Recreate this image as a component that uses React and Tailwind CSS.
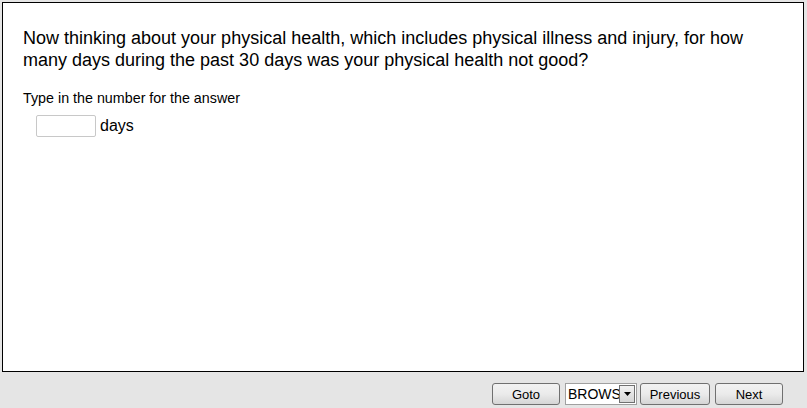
import React, { useState } from 'react';

const btn =
  'h-[22px] rounded-[3px] border border-[#707070] bg-gradient-to-b from-[#f2f2f2] via-[#ebebeb] to-[#d5d5d5] text-[13px] text-black leading-none';

const App = () => {
  const [days, setDays] = useState('');

  return (
    <div className="w-[807px] h-[408px] bg-[#e5e5e5] flex flex-col pt-[2px] pl-[2px] pr-[3px] font-['Liberation_Sans',Arial,sans-serif]">
      <div className="h-[370px] bg-white border border-black pl-[20px] pr-[20px] pt-[24px]">
        <p className="text-[18px] leading-[22px] text-black">
          Now thinking about your physical health, which includes physical illness and injury, for how many days during the past 30 days was your physical health not good?
        </p>
        <p className="mt-[19px] text-[14.3px] leading-[16px] text-black">Type in the number for the answer</p>
        <div className="mt-[9px] ml-[13px] flex items-center gap-[4px]">
          <input
            type="text"
            value={days}
            onChange={(e) => setDays(e.target.value)}
            className="w-[60px] h-[22px] border border-[#c8c8c8] rounded-[2px] px-1 text-[14px] outline-none"
          />
          <span className="text-[16px] leading-[20px]">days</span>
        </div>
      </div>

      {/* Navigation */}
      <div className="flex items-center justify-end mt-[11px] pr-[21px]">
        <button className={`${btn} w-[68px]`}>Goto</button>
        <div className="ml-[5px] flex items-center h-[22px] w-[72px] border border-[#a0a0a0] bg-white pl-[2px] overflow-hidden">
          <span className="text-[14px] leading-none flex-1 overflow-hidden whitespace-nowrap">BROWS</span>
          <span className="w-[16px] h-[18px] mr-[1px] border border-[#707070] bg-gradient-to-b from-[#f2f2f2] to-[#d5d5d5] flex items-center justify-center">
            <svg width="7" height="4" viewBox="0 0 7 4">
              <path d="M0 0h7L3.5 4z" fill="#000" />
            </svg>
          </span>
        </div>
        <button className={`${btn} ml-[3px] w-[70px]`}>Previous</button>
        <button className={`${btn} ml-[5px] w-[68px]`}>Next</button>
      </div>
    </div>
  );
};

export default App;
